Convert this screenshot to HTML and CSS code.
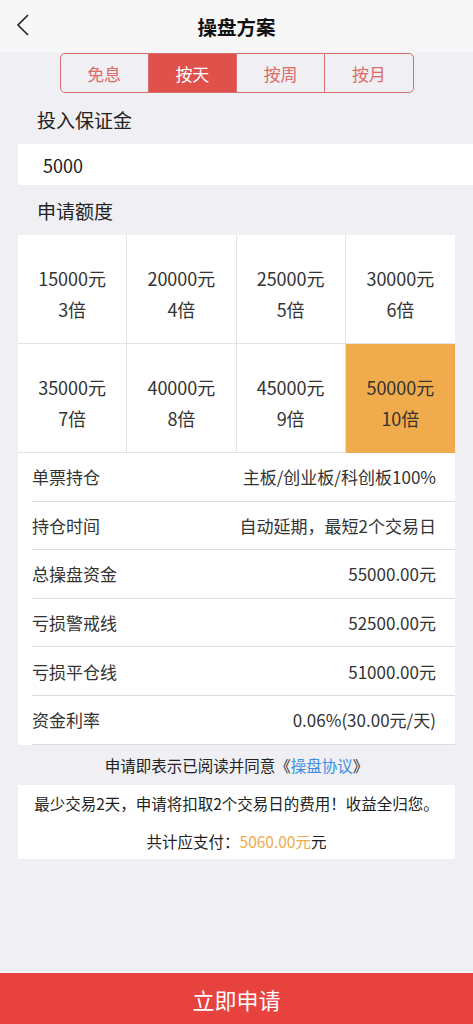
FILE: index.html
```html
<!DOCTYPE html>
<html lang="zh">
<head>
<meta charset="utf-8">
<title>操盘方案</title>
<link rel="stylesheet" href="styles.css">
</head>
<body>
<header class="topbar">
  <svg class="back" width="14" height="22" viewBox="0 0 14 22"><path d="M12 1 L2 11 L12 21" fill="none" stroke="#222" stroke-width="1.6"/></svg>
  <h1 class="title">操盘方案</h1>
</header>
<div class="tabs">
  <div class="tab">免息</div>
  <div class="tab active">按天</div>
  <div class="tab">按周</div>
  <div class="tab">按月</div>
</div>
<div class="label">投入保证金</div>
<div class="input">5000</div>
<div class="label">申请额度</div>
<div class="grid">
  <div class="cell"><span>15000元</span><span>3倍</span></div>
  <div class="cell"><span>20000元</span><span>4倍</span></div>
  <div class="cell"><span>25000元</span><span>5倍</span></div>
  <div class="cell"><span>30000元</span><span>6倍</span></div>
  <div class="cell"><span>35000元</span><span>7倍</span></div>
  <div class="cell"><span>40000元</span><span>8倍</span></div>
  <div class="cell"><span>45000元</span><span>9倍</span></div>
  <div class="cell selected"><span>50000元</span><span>10倍</span></div>
</div>
<div class="list">
  <div class="row"><span>单票持仓</span><span>主板/创业板/科创板100%</span></div>
  <div class="row"><span>持仓时间</span><span>自动延期，最短2个交易日</span></div>
  <div class="row"><span>总操盘资金</span><span>55000.00元</span></div>
  <div class="row"><span>亏损警戒线</span><span>52500.00元</span></div>
  <div class="row"><span>亏损平仓线</span><span>51000.00元</span></div>
  <div class="row"><span>资金利率</span><span>0.06%(30.00元/天)</span></div>
</div>
<p class="agree">申请即表示已阅读并同意《<span class="link">操盘协议</span>》</p>
<div class="note">
  <p>最少交易2天，申请将扣取2个交易日的费用！收益全归您。</p>
  <p>共计应支付：<span class="amount">5060.00元</span>元</p>
</div>
<button class="submit">立即申请</button>
</body>
</html>
```
FILE: styles.css
```css
* { box-sizing: border-box; }
html, body { margin: 0; padding: 0; }
body {
  background: #efeff4;
  font-family: "Noto Sans CJK SC", "Noto Sans", sans-serif;
  color: #333;
  min-height: 1024px;
}
.topbar {
  height: 52px;
  background: #f7f7f8;
  display: flex;
  align-items: center;
  justify-content: center;
  position: relative;
}
.back { position: absolute; left: 16px; top: 14px; }
.title { margin: 0; font-size: 19.5px; font-weight: 700; color: #111; }
.tabs {
  margin: 1px auto 0;
  width: 354px;
  height: 40px;
  display: flex;
  border: 1px solid #d6706c;
  border-radius: 5px;
  overflow: hidden;
}
.tab {
  flex: 1;
  display: flex;
  align-items: center;
  justify-content: center;
  font-size: 17px;
  color: #e06a66;
  border-left: 1px solid #d6706c;
}
.tab:first-child { border-left: none; }
.tab.active { background: #e0514b; color: #fff; }
.label {
  padding-left: 37px;
  font-size: 19px;
  height: 47px;
  display: flex;
  align-items: center;
  color: #222;
}
.input + .label { height: 50px; }
.tabs + .label { height: 51px; padding-top: 2px; }
.input {
  margin-left: 18px;
  height: 41px;
  background: #fff;
  padding-left: 25px;
  font-size: 18px;
  display: flex;
  align-items: center;
  color: #222;
}
.grid {
  margin: 0 18px;
  display: grid;
  grid-template-columns: repeat(4, 1fr);
  background: #fff;
}
.cell {
  height: 109px;
  padding-top: 8px;
  display: flex;
  flex-direction: column;
  align-items: center;
  justify-content: center;
  gap: 3px;
  font-size: 18px;
  line-height: 28px;
  color: #333;
  border-right: 1px solid #e3e3e3;
  border-bottom: 1px solid #e3e3e3;
}
.cell:nth-child(4n) { border-right: none; }
.cell.selected { background: #efab4c; border-color: #efab4c; }
.list {
  margin: 0 18px;
  background: #fff;
  padding-left: 14px;
}
.row {
  height: 48.6px;
  display: flex;
  align-items: center;
  justify-content: space-between;
  padding-right: 19px;
  font-size: 17px;
  color: #333;
  border-bottom: 1px solid #dcdcdc;
}
.agree {
  margin: 0;
  height: 40px;
  display: flex;
  align-items: center;
  justify-content: center;
  font-size: 15.5px;
  color: #222;
}
.link { color: #3a8ee6; }
.note {
  margin: 0 18px;
  background: #fff;
  height: 74px;
  display: flex;
  flex-direction: column;
  align-items: center;
  justify-content: center;
  gap: 12px;
}
.note p { margin: 0; font-size: 15.5px; line-height: 26px; color: #222; }
.amount { color: #efab4c; }
.submit {
  position: fixed;
  left: 0;
  right: 0;
  bottom: 0;
  height: 52px;
  border: none;
  border-top: 1px solid #f6f6f6;
  background: #e8423f;
  color: #fff;
  font-size: 22px;
  font-family: inherit;
}
```
